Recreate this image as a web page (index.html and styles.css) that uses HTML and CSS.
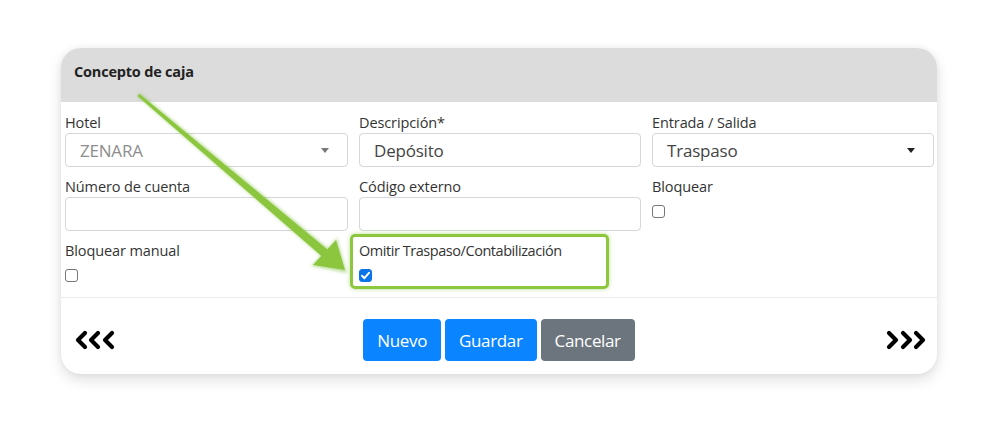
FILE: index.html
```html
<!DOCTYPE html>
<html lang="es">
<head>
<meta charset="utf-8">
<link rel="stylesheet" href="styles.css">
</head>
<body>
<div class="page">
  <div class="card">
    <div class="card-header">Concepto de caja</div>
    <div class="card-body">
      <div class="field">
        <label class="lbl">Hotel</label>
        <div class="control select disabled"><span>ZENARA</span><i class="caret"></i></div>
      </div>
      <div class="field">
        <label class="lbl">Descripción*</label>
        <div class="control"><span>Depósito</span></div>
      </div>
      <div class="field">
        <label class="lbl">Entrada / Salida</label>
        <div class="control select"><span>Traspaso</span><i class="caret dark"></i></div>
      </div>
      <div class="field">
        <label class="lbl">Número de cuenta</label>
        <div class="control"></div>
      </div>
      <div class="field">
        <label class="lbl">Código externo</label>
        <div class="control"></div>
      </div>
      <div class="field">
        <label class="lbl">Bloquear</label>
        <span class="check"></span>
      </div>
      <div class="field">
        <label class="lbl">Bloquear manual</label>
        <span class="check"></span>
      </div>
      <div class="field highlighted">
        <label class="lbl narrow">Omitir Traspaso/Contabilización</label>
        <span class="check checked"><svg viewBox="0 0 13 13" width="13" height="13"><path d="M3 6.8 L5.4 9.2 L10 3.8" fill="none" stroke="#fff" stroke-width="2" stroke-linecap="round" stroke-linejoin="round"/></svg></span>
        <span class="glow-box"></span>
      </div>
    </div>
    <div class="card-footer">
      <svg class="nav" width="42" height="20" viewBox="0 0 42 20"><g fill="none" stroke="#000" stroke-width="4.2" stroke-linecap="round" stroke-linejoin="round"><path d="M10 3 L3 10 L10 17"/><path d="M23 3 L16 10 L23 17"/><path d="M37 3 L30 10 L37 17"/></g></svg>
      <div class="btns">
        <button class="btn primary">Nuevo</button>
        <button class="btn primary">Guardar</button>
        <button class="btn secondary">Cancelar</button>
      </div>
      <svg class="nav" width="42" height="20" viewBox="0 0 42 20"><g fill="none" stroke="#000" stroke-width="4.2" stroke-linecap="round" stroke-linejoin="round"><path d="M5 3 L12 10 L5 17"/><path d="M19 3 L26 10 L19 17"/><path d="M32 3 L39 10 L32 17"/></g></svg>
    </div>
  </div>
  <svg class="pointer" width="1000" height="437" viewBox="0 0 1000 437">
    <defs>
      <filter id="soft" x="-10%" y="-10%" width="120%" height="120%">
        <feGaussianBlur stdDeviation="1.8"/>
      </filter>
    </defs>
    <g fill="#7fc241" opacity="0.5" filter="url(#soft)">
      <polygon points="137,96 140,93 329,249 322,257"/>
      <polygon points="311,266 337,238 347,273"/>
    </g>
    <g fill="#8cc63f">
      <polygon points="137.5,96 139.5,94 328,250 322,256.5"/>
      <polygon points="313,265 336,240 345,270"/>
    </g>
  </svg>
</div>
</body>
</html>
```
FILE: styles.css
```css
* { box-sizing: border-box; }
html, body { margin: 0; padding: 0; background: #fff; }
body { font-family: "Open Sans", "Noto Sans", sans-serif; color: #212529; }
.page { position: relative; width: 1000px; height: 437px; padding: 48px 0 0 61px; }
.card {
  width: 876px;
  background: #fff;
  border-radius: 20px;
  box-shadow: 0 6px 14px rgba(0,0,0,0.12), 0 0 6px rgba(0,0,0,0.06);
}
.card-header {
  height: 54px;
  background: #dcdcdc;
  border-radius: 20px 20px 0 0;
  font-weight: 700;
  font-size: 14.5px;
  letter-spacing: -0.2px;
  padding: 14px 0 0 13px;
  color: #222;
}
.card-body {
  display: grid;
  grid-template-columns: 283px 282px 282px;
  column-gap: 11px;
  row-gap: 9px;
  padding: 10px 2px 15px 4px;
  border-bottom: 1px solid #ebebeb;
}
.field { position: relative; display: flex; flex-direction: column; align-items: flex-start; }
.lbl { display: block; height: 21px; line-height: 21px; font-size: 14.5px; color: #333; letter-spacing: -0.1px; white-space: nowrap; }
.lbl.narrow { letter-spacing: -0.45px; }
.control {
  width: 100%;
  height: 34px;
  border: 1px solid #d3d6da;
  border-radius: 4px;
  display: flex;
  align-items: center;
  padding: 0 14px;
  font-size: 17px;
  color: #444;
  letter-spacing: -0.2px;
}
.control.disabled { color: #8d8d8d; }
.select { justify-content: space-between; }
.caret { width: 0; height: 0; border-left: 4.5px solid transparent; border-right: 4.5px solid transparent; border-top: 5px solid #777; margin-right: 4px; }
.caret.dark { border-top-color: #222; }
.check {
  width: 13px; height: 13px;
  margin-top: 8px;
  border: 1px solid #767676;
  border-radius: 3px;
  background: #fff;
  display: block;
}
.check.checked { background: #0b74e8; border-color: #0b74e8; }
.check svg { display: block; margin: -1px; }
.glow-box {
  position: absolute;
  left: -9px; top: -6px;
  width: 259px; height: 55px;
  border: 3px solid #8dc63f;
  border-radius: 5px;
  box-shadow: 0 0 4px rgba(141,198,63,0.6);
  pointer-events: none;
}
.card-footer {
  height: 76px;
  display: flex;
  align-items: flex-start;
  justify-content: space-between;
  padding: 21px 11px 0 14px;
}
.nav { display: block; margin-top: 11px; }
.btns { display: flex; gap: 4px; margin-left: -3px; }
.btn {
  height: 42px;
  border: none;
  border-radius: 4px;
  font-family: "Open Sans", "Noto Sans", sans-serif;
  font-size: 17px;
  color: #fff;
  padding: 0 14px;
  letter-spacing: -0.35px;
}
.btn.primary { background: #0a84ff; }
.btn.secondary { background: #6c757d; }
.pointer { position: absolute; left: 0; top: 0; pointer-events: none; }
```
